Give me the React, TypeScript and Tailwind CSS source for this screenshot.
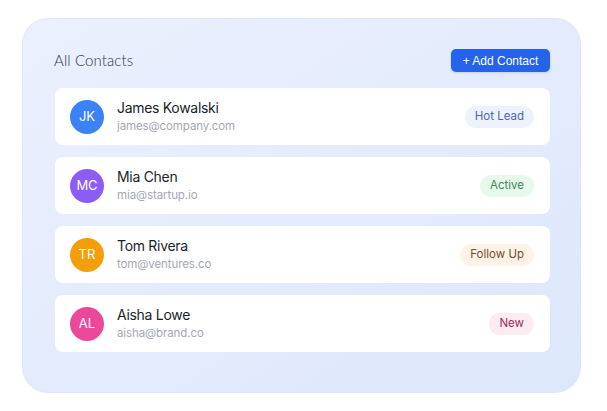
const contacts = [
  { initials: "JK", name: "James Kowalski", email: "james@company.com", avatar: "bg-[#3b82f6]", tag: "Hot Lead", tagClass: "bg-[#eef2fd] text-[#4b63b8]" },
  { initials: "MC", name: "Mia Chen", email: "mia@startup.io", avatar: "bg-[#8b5cf6]", tag: "Active", tagClass: "bg-[#e7f8ed] text-[#3a8657]" },
  { initials: "TR", name: "Tom Rivera", email: "tom@ventures.co", avatar: "bg-[#f59e0b]", tag: "Follow Up", tagClass: "bg-[#fdf3e6] text-[#7a4a2c]" },
  { initials: "AL", name: "Aisha Lowe", email: "aisha@brand.co", avatar: "bg-[#ec4899]", tag: "New", tagClass: "bg-[#fdebf2] text-[#9a2d5c]" },
];

const App = () => {
  return (
    <div className="w-[607px] h-[411px] bg-white flex pt-[18px] pl-[22px]">
      <div className="w-[559px] h-[375px] rounded-[26px] border border-[#dfe6f7] bg-gradient-to-br from-[#ebf0fd] to-[#dde7fb] pl-[32px] pr-[30px] pt-[30px] flex flex-col">
        <div className="flex items-center justify-between h-[23px] mb-[16px]">
          <div className="text-[15px] font-light text-[#2f343d] -ml-[1px] tracking-[0.1px]" style={{ fontFamily: "Lato, 'Noto Sans', sans-serif" }}>
            All Contacts
          </div>
          <button className="h-[23px] w-[99px] rounded-[5px] bg-[#2563eb] text-white text-[12px] shadow-sm" style={{ fontFamily: "'Liberation Sans', Arial, sans-serif" }}>
            + Add Contact
          </button>
        </div>
        <div className="flex flex-col gap-[12px]" style={{ fontFamily: "Inter, 'Noto Sans', sans-serif" }}>
          {contacts.map((c) => (
            <div key={c.name} className="h-[57px] w-[495px] bg-white rounded-[8px] flex items-center pl-[15px] pr-[16px]">
              <div className={`w-[34px] h-[34px] rounded-full ${c.avatar} text-white text-[13px] flex items-center justify-center`}>
                {c.initials}
              </div>
              <div className="ml-[13px] flex flex-col">
                <div className="text-[14px] font-normal text-[#1a1e28] leading-[18px] tracking-[-0.3px]">{c.name}</div>
                <div className="text-[11.5px] text-[#a3a8b1] leading-[16px] mt-[1px] tracking-[-0.1px]">{c.email}</div>
              </div>
              <div className={`ml-auto h-[22px] px-[10px] rounded-full flex items-center text-[11.5px] ${c.tagClass}`}>
                {c.tag}
              </div>
            </div>
          ))}
        </div>
      </div>
    </div>
  );
};

export default App;
